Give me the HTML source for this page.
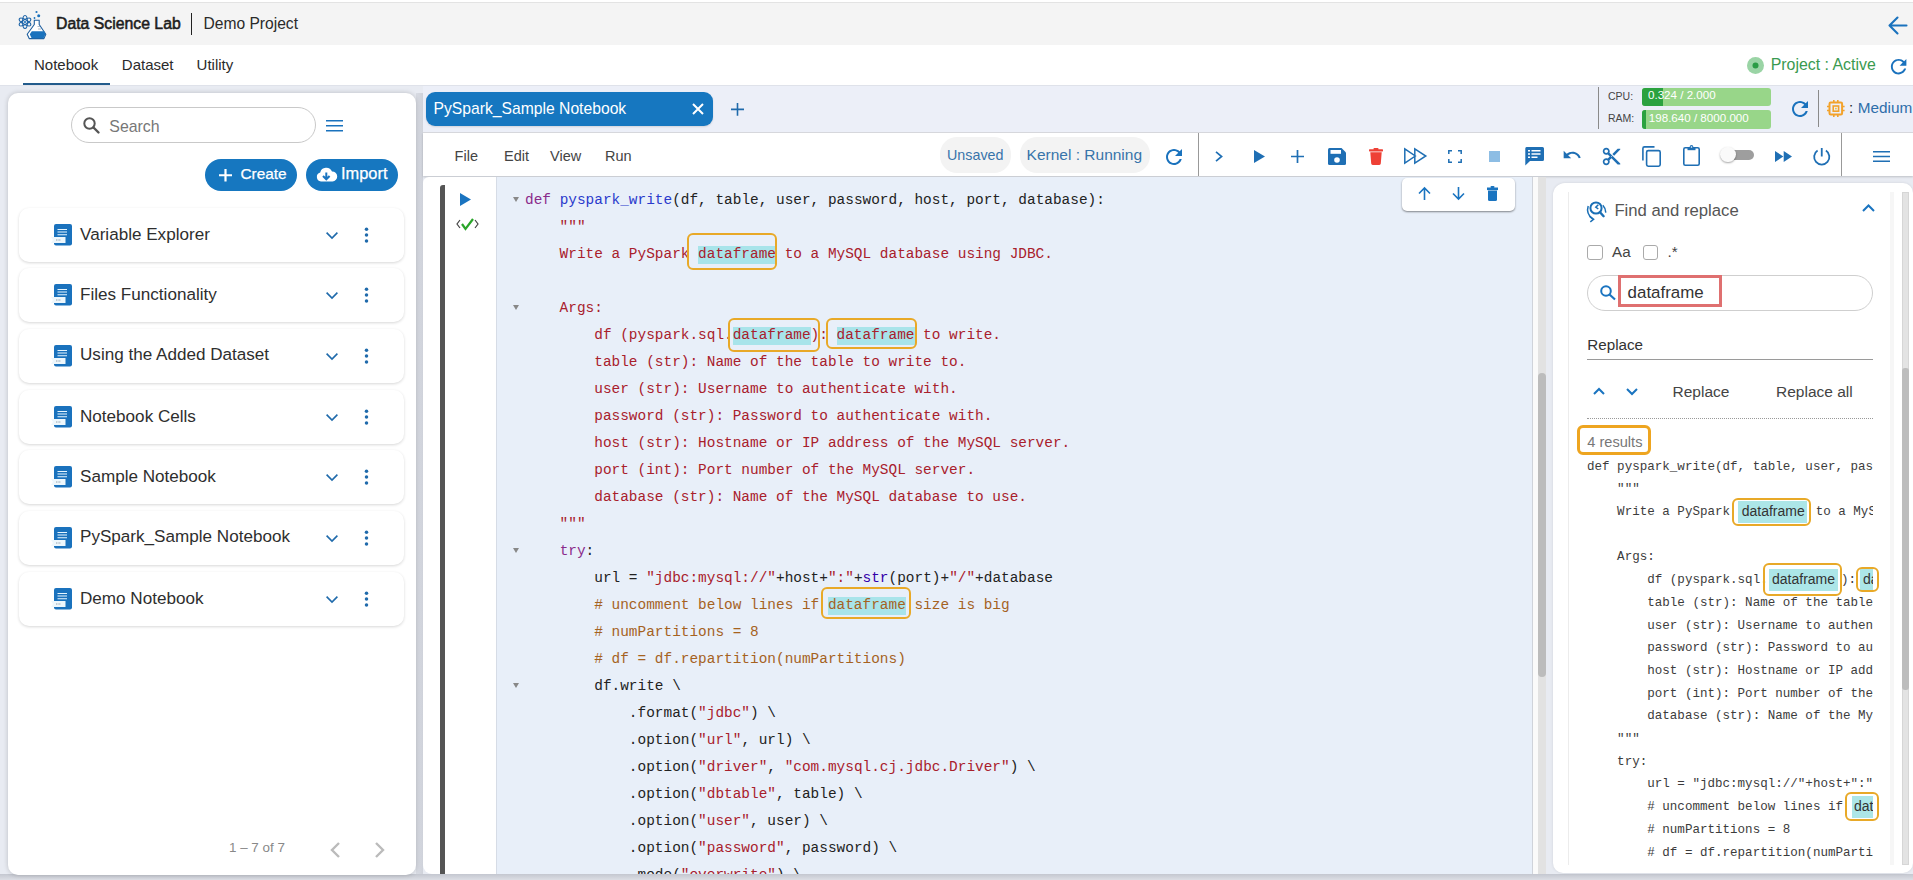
<!DOCTYPE html><html><head><meta charset="utf-8"><style>
*{box-sizing:border-box;margin:0;padding:0}
html,body{width:1913px;height:880px;overflow:hidden}
body{position:relative;background:#e8ebf2;font-family:"Liberation Sans",sans-serif;color:#333}
.a{position:absolute}
svg{position:absolute;overflow:visible}
.t{position:absolute;white-space:pre;line-height:1}
.item{position:absolute;left:19px;width:385px;height:54px;background:#fff;border-radius:10px;box-shadow:0 1px 3px rgba(0,0,0,.16)}
.mono{font-family:"Liberation Mono",monospace}
</style></head><body><div class="a" style="left:0px;top:0px;width:1913px;height:45px;background:#f4f4f4;border-top:2px solid #fff"></div>
<div class="a" style="left:0px;top:2px;width:1913px;height:1px;background:#e3e3e3"></div>
<svg style="left:18px;top:8px" width="30" height="32" viewBox="0 0 30 32">
<g fill="none" stroke="#1f65a8" stroke-width="1.15">
<ellipse cx="7" cy="14" rx="2.4" ry="6.5"/>
<ellipse cx="7" cy="14" rx="2.4" ry="6.5" transform="rotate(60 7 14)"/>
<ellipse cx="7" cy="14" rx="2.4" ry="6.5" transform="rotate(-60 7 14)"/>
</g>
<circle cx="7" cy="14" r="1.1" fill="#1a72bd"/>
<circle cx="18.5" cy="4" r="1.1" fill="#1a72bd"/>
<circle cx="20.7" cy="7.8" r="1.5" fill="#1a72bd"/>
<circle cx="16.5" cy="10" r="0.9" fill="#1a72bd"/>
<path d="M15.8,12.3 H21.6 M16.3,12.3 V16.5 L9.2,26.2 L11.2,30.6 H25.9 L27.8,26.2 L21.2,16.5 V12.3" fill="#fff" stroke="#1f5f9e" stroke-width="1.1" stroke-linejoin="round"/>
<path d="M13.8,23.2 H26.3 L27.4,26.2 L25.6,30.2 H13.6 L11.8,26.2 Z" fill="#1a72bd"/>
<path d="M19.5,18.5 H22 M20,21 H23" stroke="#9ab" stroke-width="0.8"/>
</svg>
<div class="t" style="left:56px;top:15px;font-size:15.8px;line-height:normal;color:#1d1d1d;font-weight:normal;-webkit-text-stroke:0.55px #1d1d1d">Data Science Lab</div>
<div class="a" style="left:190.5px;top:13px;width:1.4px;height:22px;background:#222"></div>
<div class="t" style="left:203.5px;top:15px;font-size:15.6px;line-height:normal;color:#2a2a2a;font-weight:normal;">Demo Project</div>
<svg style="left:1888px;top:16px" width="20" height="19" viewBox="0 0 20 19"><path d="M1.5,9.5 H18.5 M9.5,1.5 L1.5,9.5 L9.5,17.5" fill="none" stroke="#1a72bd" stroke-width="2.1" stroke-linecap="round" stroke-linejoin="round"/></svg>
<div class="a" style="left:0px;top:45px;width:1913px;height:41px;background:#fff;border-bottom:1px solid #dfe2ea"></div>
<div class="t" style="left:34px;top:56px;font-size:15px;line-height:normal;color:#2b2b2b;font-weight:normal;">Notebook</div>
<div class="t" style="left:121.8px;top:56px;font-size:15px;line-height:normal;color:#2b2b2b;font-weight:normal;">Dataset</div>
<div class="t" style="left:196.6px;top:56px;font-size:15px;line-height:normal;color:#2b2b2b;font-weight:normal;">Utility</div>
<div class="a" style="left:23px;top:83px;width:87px;height:2.2px;background:#235c8c"></div>
<svg style="left:1747px;top:57px" width="17" height="17" viewBox="0 0 17 17"><circle cx="8.5" cy="8.5" r="8.5" fill="#9ad4a5"/><circle cx="8.5" cy="8.5" r="3" fill="#2a9c45"/></svg>
<div class="t" style="left:1770.7px;top:56px;font-size:15.9px;line-height:normal;color:#3a9a50;font-weight:normal;">Project : Active</div>
<svg style="left:1886.925px;top:55.125px" width="23.25" height="23.25" viewBox="0 0 24 24"><path d="M17.65 6.35C16.2 4.9 14.21 4 12 4c-4.42 0-7.99 3.58-7.99 8s3.57 8 7.99 8c3.73 0 6.84-2.55 7.73-6h-2.08c-.82 2.33-3.04 4-5.65 4-3.31 0-6-2.69-6-6s2.69-6 6-6c1.66 0 3.14.69 4.22 1.78L13 11h7V4l-2.35 2.35z" fill="#1a72bd"/></svg>
<div class="a" style="left:0px;top:874px;width:1913px;height:6px;background:linear-gradient(#c4c7d0,#dcdee5)"></div>
<div class="a" style="left:416px;top:93px;width:7px;height:781px;background:linear-gradient(90deg,#d9dce4,#cfd2da)"></div>
<div class="a" style="left:8px;top:93px;width:408px;height:782px;background:#fff;border-radius:10px;box-shadow:0 0 5px rgba(0,0,0,.2)"></div>
<div class="a" style="left:71px;top:107px;width:245px;height:36px;border:1px solid #c9c9c9;border-radius:18px;background:#fff"></div>
<svg style="left:83px;top:117px" width="17" height="16" viewBox="0 0 17 16"><circle cx="6.5" cy="6.5" r="5.2" fill="none" stroke="#555" stroke-width="2"/><path d="M10.5,10.5 L15.5,15.5" stroke="#555" stroke-width="2.4" stroke-linecap="round"/></svg>
<div class="t" style="left:109.3px;top:118px;font-size:15.9px;line-height:normal;color:#777;font-weight:normal;">Search</div>
<svg style="left:326px;top:119.5px" width="18" height="12" viewBox="0 0 18 12"><path d="M0,0.8 H17 M0,5.8 H17 M0,10.8 H17" stroke="#1a72bd" stroke-width="1.6"/></svg>
<div class="a" style="left:205px;top:159px;width:92px;height:32px;background:#1677c0;border-radius:16px"></div>
<svg style="left:219px;top:168.7px" width="13" height="12.5" viewBox="0 0 13 12.5"><path d="M6.5,0 V12.5 M0,6.25 H13" stroke="#fff" stroke-width="2.2"/></svg>
<div class="t" style="left:240.4px;top:165px;font-size:15.4px;line-height:normal;color:#fff;font-weight:normal;-webkit-text-stroke:0.25px #fff">Create</div>
<div class="a" style="left:306px;top:159px;width:92px;height:32px;background:#1677c0;border-radius:16px"></div>
<svg style="left:316px;top:166px" width="21" height="17" viewBox="0 0 21 17"><path d="M5,15.5 A4.6,4.6 0 0 1 4.2,6.5 A6.2,6.2 0 0 1 16,5.6 A4.6,4.6 0 0 1 16.5,15.5 Z" fill="#fff"/><path d="M10.3,6.5 V13 M7,10 L10.3,13.3 L13.6,10" fill="none" stroke="#1a74c0" stroke-width="2"/></svg>
<div class="t" style="left:341px;top:164px;font-size:16.4px;line-height:normal;color:#fff;font-weight:normal;-webkit-text-stroke:0.25px #fff">Import</div>
<div class="item" style="top:207.5px"></div>
<svg style="left:51px;top:224px" width="22" height="22" viewBox="0 0 22 22"><rect x="3" y="0" width="18" height="21.5" rx="2" fill="#1a72bd"/>
<path d="M6.5,5.5 H16 M6.5,8 H16 M6.5,10.8 H16" stroke="#e6f6ff" stroke-width="1.1"/>
<path d="M0,13 H14.5 V19 H0 L2,16 Z" fill="#eef7fc"/><path d="M5,16 H10" stroke="#7a8a99" stroke-width="0.8" stroke-dasharray="1,.6"/></svg>
<div class="t" style="left:80px;top:225px;font-size:17.1px;line-height:normal;color:#2e2e2e;font-weight:normal;">Variable Explorer</div>
<svg style="left:326px;top:231.5px" width="12" height="8" viewBox="0 0 12 8"><path d="M0.6,0.6 L6,6 L11.4,0.6" fill="none" stroke="#1f6aab" stroke-width="1.6"/></svg>
<svg style="left:364px;top:227px" width="5" height="16" viewBox="0 0 5 16"><circle cx="2.5" cy="2.2" r="1.75" fill="#1f6aab"/><circle cx="2.5" cy="8" r="1.75" fill="#1f6aab"/><circle cx="2.5" cy="13.9" r="1.75" fill="#1f6aab"/></svg>
<div class="item" style="top:268.2px"></div>
<svg style="left:51px;top:284px" width="22" height="22" viewBox="0 0 22 22"><rect x="3" y="0" width="18" height="21.5" rx="2" fill="#1a72bd"/>
<path d="M6.5,5.5 H16 M6.5,8 H16 M6.5,10.8 H16" stroke="#e6f6ff" stroke-width="1.1"/>
<path d="M0,13 H14.5 V19 H0 L2,16 Z" fill="#eef7fc"/><path d="M5,16 H10" stroke="#7a8a99" stroke-width="0.8" stroke-dasharray="1,.6"/></svg>
<div class="t" style="left:80px;top:285px;font-size:17.1px;line-height:normal;color:#2e2e2e;font-weight:normal;">Files Functionality</div>
<svg style="left:326px;top:291.5px" width="12" height="8" viewBox="0 0 12 8"><path d="M0.6,0.6 L6,6 L11.4,0.6" fill="none" stroke="#1f6aab" stroke-width="1.6"/></svg>
<svg style="left:364px;top:287px" width="5" height="16" viewBox="0 0 5 16"><circle cx="2.5" cy="2.2" r="1.75" fill="#1f6aab"/><circle cx="2.5" cy="8" r="1.75" fill="#1f6aab"/><circle cx="2.5" cy="13.9" r="1.75" fill="#1f6aab"/></svg>
<div class="item" style="top:328.8px"></div>
<svg style="left:51px;top:345px" width="22" height="22" viewBox="0 0 22 22"><rect x="3" y="0" width="18" height="21.5" rx="2" fill="#1a72bd"/>
<path d="M6.5,5.5 H16 M6.5,8 H16 M6.5,10.8 H16" stroke="#e6f6ff" stroke-width="1.1"/>
<path d="M0,13 H14.5 V19 H0 L2,16 Z" fill="#eef7fc"/><path d="M5,16 H10" stroke="#7a8a99" stroke-width="0.8" stroke-dasharray="1,.6"/></svg>
<div class="t" style="left:80px;top:345px;font-size:17.1px;line-height:normal;color:#2e2e2e;font-weight:normal;">Using the Added Dataset</div>
<svg style="left:326px;top:352.5px" width="12" height="8" viewBox="0 0 12 8"><path d="M0.6,0.6 L6,6 L11.4,0.6" fill="none" stroke="#1f6aab" stroke-width="1.6"/></svg>
<svg style="left:364px;top:348px" width="5" height="16" viewBox="0 0 5 16"><circle cx="2.5" cy="2.2" r="1.75" fill="#1f6aab"/><circle cx="2.5" cy="8" r="1.75" fill="#1f6aab"/><circle cx="2.5" cy="13.9" r="1.75" fill="#1f6aab"/></svg>
<div class="item" style="top:389.5px"></div>
<svg style="left:51px;top:406px" width="22" height="22" viewBox="0 0 22 22"><rect x="3" y="0" width="18" height="21.5" rx="2" fill="#1a72bd"/>
<path d="M6.5,5.5 H16 M6.5,8 H16 M6.5,10.8 H16" stroke="#e6f6ff" stroke-width="1.1"/>
<path d="M0,13 H14.5 V19 H0 L2,16 Z" fill="#eef7fc"/><path d="M5,16 H10" stroke="#7a8a99" stroke-width="0.8" stroke-dasharray="1,.6"/></svg>
<div class="t" style="left:80px;top:407px;font-size:17.1px;line-height:normal;color:#2e2e2e;font-weight:normal;">Notebook Cells</div>
<svg style="left:326px;top:413.5px" width="12" height="8" viewBox="0 0 12 8"><path d="M0.6,0.6 L6,6 L11.4,0.6" fill="none" stroke="#1f6aab" stroke-width="1.6"/></svg>
<svg style="left:364px;top:409px" width="5" height="16" viewBox="0 0 5 16"><circle cx="2.5" cy="2.2" r="1.75" fill="#1f6aab"/><circle cx="2.5" cy="8" r="1.75" fill="#1f6aab"/><circle cx="2.5" cy="13.9" r="1.75" fill="#1f6aab"/></svg>
<div class="item" style="top:450.2px"></div>
<svg style="left:51px;top:466px" width="22" height="22" viewBox="0 0 22 22"><rect x="3" y="0" width="18" height="21.5" rx="2" fill="#1a72bd"/>
<path d="M6.5,5.5 H16 M6.5,8 H16 M6.5,10.8 H16" stroke="#e6f6ff" stroke-width="1.1"/>
<path d="M0,13 H14.5 V19 H0 L2,16 Z" fill="#eef7fc"/><path d="M5,16 H10" stroke="#7a8a99" stroke-width="0.8" stroke-dasharray="1,.6"/></svg>
<div class="t" style="left:80px;top:467px;font-size:17.1px;line-height:normal;color:#2e2e2e;font-weight:normal;">Sample Notebook</div>
<svg style="left:326px;top:473.5px" width="12" height="8" viewBox="0 0 12 8"><path d="M0.6,0.6 L6,6 L11.4,0.6" fill="none" stroke="#1f6aab" stroke-width="1.6"/></svg>
<svg style="left:364px;top:469px" width="5" height="16" viewBox="0 0 5 16"><circle cx="2.5" cy="2.2" r="1.75" fill="#1f6aab"/><circle cx="2.5" cy="8" r="1.75" fill="#1f6aab"/><circle cx="2.5" cy="13.9" r="1.75" fill="#1f6aab"/></svg>
<div class="item" style="top:510.9px"></div>
<svg style="left:51px;top:527px" width="22" height="22" viewBox="0 0 22 22"><rect x="3" y="0" width="18" height="21.5" rx="2" fill="#1a72bd"/>
<path d="M6.5,5.5 H16 M6.5,8 H16 M6.5,10.8 H16" stroke="#e6f6ff" stroke-width="1.1"/>
<path d="M0,13 H14.5 V19 H0 L2,16 Z" fill="#eef7fc"/><path d="M5,16 H10" stroke="#7a8a99" stroke-width="0.8" stroke-dasharray="1,.6"/></svg>
<div class="t" style="left:80px;top:527px;font-size:17.1px;line-height:normal;color:#2e2e2e;font-weight:normal;">PySpark_Sample Notebook</div>
<svg style="left:326px;top:534.5px" width="12" height="8" viewBox="0 0 12 8"><path d="M0.6,0.6 L6,6 L11.4,0.6" fill="none" stroke="#1f6aab" stroke-width="1.6"/></svg>
<svg style="left:364px;top:530px" width="5" height="16" viewBox="0 0 5 16"><circle cx="2.5" cy="2.2" r="1.75" fill="#1f6aab"/><circle cx="2.5" cy="8" r="1.75" fill="#1f6aab"/><circle cx="2.5" cy="13.9" r="1.75" fill="#1f6aab"/></svg>
<div class="item" style="top:571.5px"></div>
<svg style="left:51px;top:588px" width="22" height="22" viewBox="0 0 22 22"><rect x="3" y="0" width="18" height="21.5" rx="2" fill="#1a72bd"/>
<path d="M6.5,5.5 H16 M6.5,8 H16 M6.5,10.8 H16" stroke="#e6f6ff" stroke-width="1.1"/>
<path d="M0,13 H14.5 V19 H0 L2,16 Z" fill="#eef7fc"/><path d="M5,16 H10" stroke="#7a8a99" stroke-width="0.8" stroke-dasharray="1,.6"/></svg>
<div class="t" style="left:80px;top:589px;font-size:17.1px;line-height:normal;color:#2e2e2e;font-weight:normal;">Demo Notebook</div>
<svg style="left:326px;top:595.5px" width="12" height="8" viewBox="0 0 12 8"><path d="M0.6,0.6 L6,6 L11.4,0.6" fill="none" stroke="#1f6aab" stroke-width="1.6"/></svg>
<svg style="left:364px;top:591px" width="5" height="16" viewBox="0 0 5 16"><circle cx="2.5" cy="2.2" r="1.75" fill="#1f6aab"/><circle cx="2.5" cy="8" r="1.75" fill="#1f6aab"/><circle cx="2.5" cy="13.9" r="1.75" fill="#1f6aab"/></svg>
<div class="t" style="left:229px;top:840px;font-size:13.4px;line-height:normal;color:#888;font-weight:normal;">1 – 7 of 7</div>
<svg style="left:330px;top:842px" width="10" height="16" viewBox="0 0 10 16"><path d="M9,1 L2,8 L9,15" fill="none" stroke="#bbb" stroke-width="2.4"/></svg>
<svg style="left:375px;top:842px" width="10" height="16" viewBox="0 0 10 16"><path d="M1,1 L8,8 L1,15" fill="none" stroke="#bbb" stroke-width="2.4"/></svg>
<div class="a" style="left:423px;top:86px;width:1490px;height:47px;background:#eceff8;border-bottom:1px solid #d9dadf"></div>
<div class="a" style="left:426px;top:92px;width:287px;height:34px;background:#1677c0;border-radius:9px;box-shadow:0 1px 2px rgba(0,0,0,.12)"></div>
<div class="t" style="left:433.5px;top:100px;font-size:15.7px;line-height:normal;color:#fff;font-weight:normal;">PySpark_Sample Notebook</div>
<svg style="left:692px;top:103px" width="12" height="12" viewBox="0 0 12 12"><path d="M1,1 L11,11 M11,1 L1,11" stroke="#fff" stroke-width="2"/></svg>
<svg style="left:731px;top:103px" width="13" height="13" viewBox="0 0 13 13"><path d="M6.5,0 V12.8 M0,6.4 H13" stroke="#1f6aab" stroke-width="1.6"/></svg>
<div class="a" style="left:1598px;top:87px;width:1px;height:42px;background:#8a8a8a"></div>
<div class="t" style="left:1608px;top:90px;font-size:10.5px;line-height:normal;color:#444;font-weight:normal;">CPU:</div>
<div class="t" style="left:1608px;top:112px;font-size:10.5px;line-height:normal;color:#444;font-weight:normal;">RAM:</div>
<div class="a" style="left:1642px;top:88px;width:129px;height:17.5px;background:#98d689;border-radius:3px;overflow:hidden"></div>
<div class="a" style="left:1642px;top:88px;width:21px;height:17.5px;background:#2ba23f;border-radius:3px 0 0 3px"></div>
<div class="t" style="left:1648px;top:88px;font-size:11.6px;line-height:normal;color:#fff;font-weight:normal;">0.324 / 2.000</div>
<div class="a" style="left:1642px;top:110px;width:129px;height:18.5px;background:#98d689;border-radius:3px"></div>
<div class="a" style="left:1642px;top:110px;width:3.5px;height:18.5px;background:#2ba23f;border-radius:3px 0 0 3px"></div>
<div class="t" style="left:1648.8px;top:111px;font-size:11.6px;line-height:normal;color:#fff;font-weight:normal;">198.640 / 8000.000</div>
<svg style="left:1788.0px;top:96.5px" width="24.0" height="24.0" viewBox="0 0 24 24"><path d="M17.65 6.35C16.2 4.9 14.21 4 12 4c-4.42 0-7.99 3.58-7.99 8s3.57 8 7.99 8c3.73 0 6.84-2.55 7.73-6h-2.08c-.82 2.33-3.04 4-5.65 4-3.31 0-6-2.69-6-6s2.69-6 6-6c1.66 0 3.14.69 4.22 1.78L13 11h7V4l-2.35 2.35z" fill="#1a72bd"/></svg>
<div class="a" style="left:1818px;top:90px;width:1px;height:37px;background:#8a8a8a"></div>
<svg style="left:1827px;top:100px" width="18" height="17" viewBox="0 0 18 17"><rect x="2.5" y="2.5" width="12.6" height="12" rx="1.2" fill="none" stroke="#f2a22b" stroke-width="2"/>
<rect x="6.2" y="6" width="5.4" height="5.2" fill="none" stroke="#f2a22b" stroke-width="1.6"/><rect x="8" y="7.8" width="1.8" height="1.6" fill="#f7c040"/>
<path d="M6.8,0 V2 M10.8,0 V2 M6.8,15 V17 M10.8,15 V17 M0,6.5 H2 M0,10.5 H2 M15.6,6.5 H17.6 M15.6,10.5 H17.6" stroke="#f2a22b" stroke-width="1.6"/></svg>
<div class="t" style="left:1849px;top:99px;font-size:15px;line-height:normal;color:#222;font-weight:normal;">:</div>
<div class="t" style="left:1857.8px;top:99px;font-size:15.3px;line-height:normal;color:#2e6eaa;font-weight:normal;">Medium</div>
<div class="a" style="left:423px;top:133px;width:1490px;height:43px;background:#fff;box-shadow:0 1px 2px rgba(0,0,0,.18)"></div>
<div class="t" style="left:454.6px;top:148px;font-size:14.5px;line-height:normal;color:#444;font-weight:normal;">File</div>
<div class="t" style="left:504px;top:148px;font-size:14.5px;line-height:normal;color:#444;font-weight:normal;">Edit</div>
<div class="t" style="left:550px;top:148px;font-size:14.5px;line-height:normal;color:#444;font-weight:normal;">View</div>
<div class="t" style="left:605px;top:148px;font-size:14.5px;line-height:normal;color:#444;font-weight:normal;">Run</div>
<div class="a" style="left:940px;top:137px;width:71px;height:36px;background:#f3f3f3;border-radius:17px"></div>
<div class="t" style="left:947px;top:147px;font-size:14.3px;line-height:normal;color:#3874aa;font-weight:normal;">Unsaved</div>
<div class="a" style="left:1020px;top:137px;width:130px;height:36px;background:#f3f3f3;border-radius:17px"></div>
<div class="t" style="left:1026.6px;top:146px;font-size:15.5px;line-height:normal;color:#3874aa;font-weight:normal;">Kernel : Running</div>
<svg style="left:1162.0px;top:144.5px" width="24.0" height="24.0" viewBox="0 0 24 24"><path d="M17.65 6.35C16.2 4.9 14.21 4 12 4c-4.42 0-7.99 3.58-7.99 8s3.57 8 7.99 8c3.73 0 6.84-2.55 7.73-6h-2.08c-.82 2.33-3.04 4-5.65 4-3.31 0-6-2.69-6-6s2.69-6 6-6c1.66 0 3.14.69 4.22 1.78L13 11h7V4l-2.35 2.35z" fill="#1a72bd"/></svg>
<div class="a" style="left:1198px;top:133px;width:1px;height:43px;background:#999"></div>
<svg style="left:1215px;top:151px" width="8" height="11" viewBox="0 0 8 11"><path d="M1,0.8 L6.6,5.5 L1,10.2" fill="none" stroke="#1f6fb4" stroke-width="1.7"/></svg>
<svg style="left:1254px;top:150px" width="11" height="13" viewBox="0 0 11 13"><path d="M0,0 L11,6.5 L0,13 Z" fill="#1f6fb4"/></svg>
<svg style="left:1291px;top:150px" width="13" height="13" viewBox="0 0 13 13"><path d="M6.5,0 V13 M0,6.5 H13" stroke="#1f6fb4" stroke-width="1.7"/></svg>
<svg style="left:1328px;top:148px" width="18" height="17" viewBox="0 0 18 17"><path d="M0,1.5 Q0,0 1.5,0 H13.5 L18,4.5 V15.5 Q18,17 16.5,17 H1.5 Q0,17 0,15.5 Z" fill="#1f6fb4"/><rect x="2.5" y="2" width="10.5" height="3.8" fill="#fff"/><circle cx="9" cy="12" r="2.8" fill="#fff"/></svg>
<svg style="left:1369px;top:148px" width="14" height="17" viewBox="0 0 14 17"><rect x="0" y="1.2" width="14" height="2.2" rx="0.6" fill="#ee4035"/><rect x="4.5" y="0" width="5" height="2" rx="0.8" fill="#ee4035"/><path d="M1.3,4.2 H12.7 L11.8,15.6 Q11.7,17 10.3,17 H3.7 Q2.3,17 2.2,15.6 Z" fill="#ee4035"/></svg>
<svg style="left:1404px;top:148px" width="23" height="16" viewBox="0 0 23 16"><path d="M0.8,0.8 L11.3,8 L0.8,15.2 Z M10.8,0.8 L21.8,8 L10.8,15.2 Z" fill="none" stroke="#1f6fb4" stroke-width="1.5" stroke-linejoin="miter"/></svg>
<svg style="left:1448px;top:150px" width="14" height="13" viewBox="0 0 14 13"><path d="M0.8,4 V0.8 H4 M10,0.8 H13.2 V4 M13.2,9 V12.2 H10 M4,12.2 H0.8 V9" fill="none" stroke="#1f6fb4" stroke-width="1.5"/></svg>
<svg style="left:1489px;top:151px" width="11" height="11" viewBox="0 0 11 11"><rect width="11" height="11" fill="#8dbde4"/></svg>
<svg style="left:1524.5px;top:147px" width="19" height="18.5" viewBox="0 0 19 18.5"><path d="M1.5,0 H17.5 Q19,0 19,1.5 V12.5 Q19,14 17.5,14 H5 L0.3,18.5 V1.5 Q0.3,0 1.5,0 Z" fill="#1f6fb4"/><path d="M3,3.8 H5 M6.5,3.8 H15.5 M3,7 H5 M6.5,7 H15.5 M3,10.2 H5 M6.5,10.2 H12.5" stroke="#fff" stroke-width="1.6"/></svg>
<svg style="left:1561.8px;top:145.2px" width="20" height="20" viewBox="0 0 24 24"><path d="M12.5 8c-2.65 0-5.05.99-6.9 2.6L2 7v9h9l-3.62-3.62c1.39-1.16 3.16-1.88 5.12-1.88 3.54 0 6.55 2.31 7.6 5.5l2.37-.78C21.08 11.03 17.15 8 12.5 8z" fill="#1f6fb4"/></svg>
<svg style="left:1601px;top:145.8px" width="21" height="21" viewBox="0 0 24 24"><path d="M9.64 7.64c.23-.5.36-1.05.36-1.640 0-2.21-1.79-4-4-4S2 3.79 2 6s1.79 4 4 4c.59 0 1.14-.13 1.64-.36L10 12l-2.36 2.360C7.14 14.13 6.59 14 6 14c-2.21 0-4 1.79-4 4s1.79 4 4 4 4-1.79 4-4c0-.59-.13-1.14-.36-1.64L12 14l7 7h3v-1L9.64 7.64zM6 8c-1.1 0-2-.89-2-2s.9-2 2-2 2 .89 2 2-.9 2-2 2zm0 12c-1.1 0-2-.89-2-2s.9-2 2-2 2 .89 2 2-.9 2-2 2zm6-7.5c-.28 0-.5-.22-.5-.5s.22-.5.5-.5.5.22.5.5-.22.5-.5.5zM19 3l-6 6 2 2 7-7V3z" fill="#1f6fb4"/></svg>
<svg style="left:1642px;top:146px" width="19" height="21" viewBox="0 0 19 21"><path d="M12.5,0.9 H2.5 Q0.9,0.9 0.9,2.5 V14.5" fill="none" stroke="#1f6fb4" stroke-width="1.6"/><rect x="4.6" y="4.6" width="13.6" height="15.6" rx="1.6" fill="none" stroke="#1f6fb4" stroke-width="1.6"/></svg>
<svg style="left:1683px;top:145px" width="17" height="21" viewBox="0 0 17 21"><rect x="0.8" y="2.8" width="15.4" height="17.4" rx="1.5" fill="none" stroke="#1f6fb4" stroke-width="1.6"/><path d="M4.5,2 H12.5 V5.2 H4.5 Z" fill="#1f6fb4"/><circle cx="8.5" cy="1.8" r="1.8" fill="#1f6fb4"/><circle cx="8.5" cy="2" r="0.8" fill="#fff"/></svg>
<div class="a" style="left:1728px;top:150px;width:26px;height:10px;background:#9e9e9e;border-radius:5px"></div>
<div class="a" style="left:1720px;top:146.5px;width:15.5px;height:15.5px;background:#fafafa;border-radius:50%;box-shadow:0 1px 2px rgba(0,0,0,.35)"></div>
<svg style="left:1774.5px;top:151px" width="17" height="11" viewBox="0 0 17 11"><path d="M0,0 L8.3,5.5 L0,11 Z M8.7,0 L17,5.5 L8.7,11 Z" fill="#1f6fb4"/></svg>
<svg style="left:1813px;top:148px" width="17.5" height="17" viewBox="0 0 17.5 17"><path d="M4.6,2.6 A7.6,7.6 0 1 0 12.9,2.6" fill="none" stroke="#1f6fb4" stroke-width="1.8"/><path d="M8.75,0 V8.5" stroke="#1f6fb4" stroke-width="1.8"/></svg>
<div class="a" style="left:1841px;top:133px;width:1px;height:43px;background:#999"></div>
<svg style="left:1873px;top:151px" width="17" height="11" viewBox="0 0 17 11"><path d="M0,0.8 H17 M0,5.5 H17 M0,10.2 H17" stroke="#1f6fb4" stroke-width="1.5"/></svg>
<div class="a" style="left:423px;top:177px;width:1123px;height:697px;background:#fff;border-radius:6px 0 0 9px"></div>
<div class="a" style="left:440px;top:185px;width:5px;height:689px;background:#555;border-radius:3px 0 0 0"></div>
<svg style="left:460px;top:193px" width="11" height="13" viewBox="0 0 11 13"><path d="M0,0 L11,6.5 L0,13 Z" fill="#1a74c0"/></svg>
<svg style="left:456px;top:218px" width="23" height="12" viewBox="0 0 23 12"><path d="M4,2 L1,6 L4,10 M19,2 L22,6 L19,10" fill="none" stroke="#444" stroke-width="1.2"/><path d="M6,6 L9.5,11 L17,1" fill="none" stroke="#2aa52a" stroke-width="2.2"/></svg>
<div class="a" style="left:496px;top:177px;width:1037px;height:697px;background:#e8eff9;border-left:1px solid #d6dce6"></div>
<div class="a" style="left:1532px;top:177px;width:1px;height:697px;background:#cfd3da"></div>
<div class="a" style="left:1533px;top:177px;width:5px;height:697px;background:#fafafa"></div>
<div class="a" style="left:1538px;top:177px;width:8px;height:697px;background:#e2e2e2"></div>
<div class="a" style="left:1538px;top:373px;width:8px;height:304px;background:#bcbcbc;border-radius:4px"></div>
<div class="a" style="left:497px;top:177px;width:1035px;height:697px;overflow:hidden">
<div class="a" style="left:201.2px;top:68.5px;width:77.9px;height:18px;background:#a8e4ea"></div>
<div class="a" style="left:235.8px;top:149.5px;width:77.9px;height:18px;background:#a8e4ea"></div>
<div class="a" style="left:339.8px;top:149.5px;width:77.9px;height:18px;background:#a8e4ea"></div>
<div class="a" style="left:331.1px;top:419.5px;width:77.9px;height:18px;background:#a8e4ea"></div>
<div class="t mono" style="left:28px;top:10px;font-size:14.43px;line-height:27px;height:27px"><span style="color:#8a2a8a">def</span><span style="color:#222"> </span><span style="color:#2a3acc">pyspark_write</span><span style="color:#222">(df, table, user, password, host, port, database):</span></div>
<div class="t mono" style="left:28px;top:37px;font-size:14.43px;line-height:27px;height:27px"><span style="color:#a8202c">    &quot;&quot;&quot;</span></div>
<div class="t mono" style="left:28px;top:64px;font-size:14.43px;line-height:27px;height:27px"><span style="color:#a8202c">    Write a PySpark dataframe to a MySQL database using JDBC.</span></div>
<div class="t mono" style="left:28px;top:91px;font-size:14.43px;line-height:27px;height:27px"></div>
<div class="t mono" style="left:28px;top:118px;font-size:14.43px;line-height:27px;height:27px"><span style="color:#a8202c">    Args:</span></div>
<div class="t mono" style="left:28px;top:145px;font-size:14.43px;line-height:27px;height:27px"><span style="color:#a8202c">        df (pyspark.sql.dataframe): dataframe to write.</span></div>
<div class="t mono" style="left:28px;top:172px;font-size:14.43px;line-height:27px;height:27px"><span style="color:#a8202c">        table (str): Name of the table to write to.</span></div>
<div class="t mono" style="left:28px;top:199px;font-size:14.43px;line-height:27px;height:27px"><span style="color:#a8202c">        user (str): Username to authenticate with.</span></div>
<div class="t mono" style="left:28px;top:226px;font-size:14.43px;line-height:27px;height:27px"><span style="color:#a8202c">        password (str): Password to authenticate with.</span></div>
<div class="t mono" style="left:28px;top:253px;font-size:14.43px;line-height:27px;height:27px"><span style="color:#a8202c">        host (str): Hostname or IP address of the MySQL server.</span></div>
<div class="t mono" style="left:28px;top:280px;font-size:14.43px;line-height:27px;height:27px"><span style="color:#a8202c">        port (int): Port number of the MySQL server.</span></div>
<div class="t mono" style="left:28px;top:307px;font-size:14.43px;line-height:27px;height:27px"><span style="color:#a8202c">        database (str): Name of the MySQL database to use.</span></div>
<div class="t mono" style="left:28px;top:334px;font-size:14.43px;line-height:27px;height:27px"><span style="color:#a8202c">    &quot;&quot;&quot;</span></div>
<div class="t mono" style="left:28px;top:361px;font-size:14.43px;line-height:27px;height:27px"><span style="color:#222">    </span><span style="color:#8a2a8a">try</span><span style="color:#222">:</span></div>
<div class="t mono" style="left:28px;top:388px;font-size:14.43px;line-height:27px;height:27px"><span style="color:#222">        url = </span><span style="color:#a8202c">&quot;jdbc:mysql://&quot;</span><span style="color:#222">+host+</span><span style="color:#a8202c">&quot;:&quot;</span><span style="color:#222">+</span><span style="color:#3300aa">str</span><span style="color:#222">(port)+</span><span style="color:#a8202c">&quot;/&quot;</span><span style="color:#222">+database</span></div>
<div class="t mono" style="left:28px;top:415px;font-size:14.43px;line-height:27px;height:27px"><span style="color:#a5621f">        # uncomment below lines if dataframe size is big</span></div>
<div class="t mono" style="left:28px;top:442px;font-size:14.43px;line-height:27px;height:27px"><span style="color:#a5621f">        # numPartitions = 8</span></div>
<div class="t mono" style="left:28px;top:469px;font-size:14.43px;line-height:27px;height:27px"><span style="color:#a5621f">        # df = df.repartition(numPartitions)</span></div>
<div class="t mono" style="left:28px;top:496px;font-size:14.43px;line-height:27px;height:27px"><span style="color:#222">        df.write \</span></div>
<div class="t mono" style="left:28px;top:523px;font-size:14.43px;line-height:27px;height:27px"><span style="color:#222">            .format(</span><span style="color:#a8202c">&quot;jdbc&quot;</span><span style="color:#222">) \</span></div>
<div class="t mono" style="left:28px;top:550px;font-size:14.43px;line-height:27px;height:27px"><span style="color:#222">            .option(</span><span style="color:#a8202c">&quot;url&quot;</span><span style="color:#222">, url) \</span></div>
<div class="t mono" style="left:28px;top:577px;font-size:14.43px;line-height:27px;height:27px"><span style="color:#222">            .option(</span><span style="color:#a8202c">&quot;driver&quot;</span><span style="color:#222">, </span><span style="color:#a8202c">&quot;com.mysql.cj.jdbc.Driver&quot;</span><span style="color:#222">) \</span></div>
<div class="t mono" style="left:28px;top:604px;font-size:14.43px;line-height:27px;height:27px"><span style="color:#222">            .option(</span><span style="color:#a8202c">&quot;dbtable&quot;</span><span style="color:#222">, table) \</span></div>
<div class="t mono" style="left:28px;top:631px;font-size:14.43px;line-height:27px;height:27px"><span style="color:#222">            .option(</span><span style="color:#a8202c">&quot;user&quot;</span><span style="color:#222">, user) \</span></div>
<div class="t mono" style="left:28px;top:658px;font-size:14.43px;line-height:27px;height:27px"><span style="color:#222">            .option(</span><span style="color:#a8202c">&quot;password&quot;</span><span style="color:#222">, password) \</span></div>
<div class="t mono" style="left:28px;top:685px;font-size:14.43px;line-height:27px;height:27px"><span style="color:#222">            .mode(</span><span style="color:#a8202c">&quot;overwrite&quot;</span><span style="color:#222">) \</span></div>
<svg style="left:16px;top:20px" width="6" height="5"><path d="M0,0 H6 L3,5 Z" fill="#888"/></svg>
<svg style="left:16px;top:128px" width="6" height="5"><path d="M0,0 H6 L3,5 Z" fill="#888"/></svg>
<svg style="left:16px;top:371px" width="6" height="5"><path d="M0,0 H6 L3,5 Z" fill="#888"/></svg>
<svg style="left:16px;top:506px" width="6" height="5"><path d="M0,0 H6 L3,5 Z" fill="#888"/></svg>
</div>
<div class="a" style="left:687px;top:233px;width:90px;height:37px;border:2.5px solid #e8a928;border-radius:6px"></div>
<div class="a" style="left:728px;top:318px;width:92px;height:34px;border:2.5px solid #e8a928;border-radius:6px"></div>
<div class="a" style="left:826px;top:318px;width:91px;height:31px;border:2.5px solid #e8a928;border-radius:6px"></div>
<div class="a" style="left:821px;top:587px;width:90px;height:32px;border:2.5px solid #e8a928;border-radius:6px"></div>
<div class="a" style="left:1402px;top:178px;width:113px;height:33px;background:#fff;border-radius:5px;box-shadow:0 1px 2px rgba(0,0,0,.45)"></div>
<svg style="left:1418px;top:187px" width="13" height="13" viewBox="0 0 13 13"><path d="M6.5,13 V1 M1,6.5 L6.5,1 L12,6.5" fill="none" stroke="#1a74c0" stroke-width="1.6"/></svg>
<svg style="left:1452px;top:187px" width="13" height="13" viewBox="0 0 13 13"><path d="M6.5,0 V12 M1,6.5 L6.5,12 L12,6.5" fill="none" stroke="#1a74c0" stroke-width="1.6"/></svg>
<svg style="left:1487px;top:186px" width="11" height="15" viewBox="0 0 11 15"><rect x="0" y="1.5" width="11" height="2.6" fill="#1a74c0"/><rect x="3.5" y="0" width="4" height="2" rx="1" fill="#1a74c0"/><path d="M1,4.5 H10 V13.5 Q10,15 8.5,15 H2.5 Q1,15 1,13.5 Z" fill="#1a74c0"/></svg>
<div class="a" style="left:1553px;top:183px;width:360px;height:690px;background:#fff;border-radius:12px 10px 10px 10px;box-shadow:0 0 3px rgba(0,0,0,.1)"></div>
<div class="a" style="left:1568px;top:192px;width:326px;height:673px;border-left:1px solid #ececec;border-right:4px solid #f6f6f6"></div>
<div class="a" style="left:1902px;top:192px;width:7px;height:673px;background:#e3e3e3;border:1px solid #d6d6d6"></div>
<div class="a" style="left:1902px;top:368px;width:7px;height:322px;background:#bdbdbd;border-radius:3px"></div>
<svg style="left:1584px;top:200px" width="24" height="22" viewBox="0 0 24 22"><circle cx="12" cy="8" r="5.6" fill="none" stroke="#1a6fb5" stroke-width="2"/><path d="M16,12.2 L19.6,16.2" stroke="#1a6fb5" stroke-width="2.4" stroke-linecap="round"/><path d="M14.3,4.8 L11.8,7.2 L14.3,9" fill="none" stroke="#1a6fb5" stroke-width="1.5"/><path d="M4.2,6 Q1.8,13.5 8.6,19" fill="none" stroke="#1a6fb5" stroke-width="1.5"/><path d="M5.8,16.3 L9.6,19.3 L6.3,21.8" fill="none" stroke="#1a6fb5" stroke-width="1.5"/><path d="M18.8,5.2 Q21.6,8 21.8,12.6" fill="none" stroke="#1a6fb5" stroke-width="1.5"/></svg>
<div class="t" style="left:1614.4px;top:201px;font-size:16.7px;line-height:normal;color:#555;font-weight:normal;">Find and replace</div>
<svg style="left:1862px;top:204px" width="13" height="8" viewBox="0 0 13 8"><path d="M1,7 L6.5,1.5 L12,7" fill="none" stroke="#1a74c0" stroke-width="2"/></svg>
<div class="a" style="left:1587px;top:245px;width:16px;height:15px;border:1.3px solid #aaa;border-radius:3px"></div>
<div class="t" style="left:1612px;top:243px;font-size:15.2px;line-height:normal;color:#444;font-weight:normal;">Aa</div>
<div class="a" style="left:1643px;top:245px;width:15px;height:15px;border:1.3px solid #aaa;border-radius:3px"></div>
<div class="t" style="left:1667.6px;top:243px;font-size:15.2px;line-height:normal;color:#444;font-weight:normal;">.*</div>
<div class="a" style="left:1587px;top:275px;width:286px;height:36px;border:1px solid #cfcfcf;border-radius:18px"></div>
<svg style="left:1600px;top:285px" width="16" height="15" viewBox="0 0 16 15"><circle cx="6" cy="6" r="4.8" fill="none" stroke="#1a74c0" stroke-width="2"/><path d="M9.5,9.5 L15,14.5" stroke="#1a74c0" stroke-width="2.2"/></svg>
<div class="a" style="left:1618px;top:275px;width:104px;height:32px;border:3px solid #df7070"></div>
<div class="t" style="left:1627.6px;top:283px;font-size:16.9px;line-height:normal;color:#333;font-weight:normal;">dataframe</div>
<div class="t" style="left:1587.3px;top:336px;font-size:15.2px;line-height:normal;color:#333;font-weight:normal;">Replace</div>
<div class="a" style="left:1587px;top:359px;width:286px;height:1.3px;background:#9a9a9a"></div>
<svg style="left:1593px;top:388px" width="12" height="7" viewBox="0 0 12 7"><path d="M1,6 L6,1 L11,6" fill="none" stroke="#1a74c0" stroke-width="2"/></svg>
<svg style="left:1626px;top:388px" width="12" height="7" viewBox="0 0 12 7"><path d="M1,1 L6,6 L11,1" fill="none" stroke="#1a74c0" stroke-width="2"/></svg>
<div class="t" style="left:1672.5px;top:383px;font-size:15.5px;line-height:normal;color:#444;font-weight:normal;">Replace</div>
<div class="t" style="left:1776px;top:383px;font-size:15.5px;line-height:normal;color:#444;font-weight:normal;">Replace all</div>
<div class="a" style="left:1587px;top:418px;width:286px;height:1px;border-top:1px dotted #999"></div>
<div class="a" style="left:1577px;top:425px;width:74px;height:30px;border:3px solid #eea520;border-radius:6px"></div>
<div class="t" style="left:1587.3px;top:434px;font-size:14.6px;line-height:normal;color:#777;font-weight:normal;">4 results</div>
<div class="a" style="left:1587px;top:440px;width:286px;height:425px;overflow:hidden">
<div class="t mono" style="left:0px;top:15.6px;font-size:12.55px;line-height:22.7px;color:#3c3c3c">def pyspark_write(df, table, user, pas</div>
<div class="t mono" style="left:0px;top:38.3px;font-size:12.55px;line-height:22.7px;color:#3c3c3c">    &quot;&quot;&quot;</div>
<div class="t mono" style="left:0px;top:61.0px;font-size:12.55px;line-height:22.7px;color:#3c3c3c">    Write a PySpark </div>
<div class="t mono" style="left:0px;top:83.7px;font-size:12.55px;line-height:22.7px;color:#3c3c3c"></div>
<div class="t mono" style="left:0px;top:106.4px;font-size:12.55px;line-height:22.7px;color:#3c3c3c">    Args:</div>
<div class="t mono" style="left:0px;top:129.1px;font-size:12.55px;line-height:22.7px;color:#3c3c3c">        df (pyspark.sql.</div>
<div class="t mono" style="left:0px;top:151.8px;font-size:12.55px;line-height:22.7px;color:#3c3c3c">        table (str): Name of the table</div>
<div class="t mono" style="left:0px;top:174.5px;font-size:12.55px;line-height:22.7px;color:#3c3c3c">        user (str): Username to authen</div>
<div class="t mono" style="left:0px;top:197.2px;font-size:12.55px;line-height:22.7px;color:#3c3c3c">        password (str): Password to au</div>
<div class="t mono" style="left:0px;top:219.9px;font-size:12.55px;line-height:22.7px;color:#3c3c3c">        host (str): Hostname or IP add</div>
<div class="t mono" style="left:0px;top:242.6px;font-size:12.55px;line-height:22.7px;color:#3c3c3c">        port (int): Port number of the</div>
<div class="t mono" style="left:0px;top:265.3px;font-size:12.55px;line-height:22.7px;color:#3c3c3c">        database (str): Name of the My</div>
<div class="t mono" style="left:0px;top:288.0px;font-size:12.55px;line-height:22.7px;color:#3c3c3c">    &quot;&quot;&quot;</div>
<div class="t mono" style="left:0px;top:310.7px;font-size:12.55px;line-height:22.7px;color:#3c3c3c">    try:</div>
<div class="t mono" style="left:0px;top:333.4px;font-size:12.55px;line-height:22.7px;color:#3c3c3c">        url = &quot;jdbc:mysql://&quot;+host+&quot;:&quot;</div>
<div class="t mono" style="left:0px;top:356.1px;font-size:12.55px;line-height:22.7px;color:#3c3c3c">        # uncomment below lines if </div>
<div class="t mono" style="left:0px;top:378.8px;font-size:12.55px;line-height:22.7px;color:#3c3c3c">        # numPartitions = 8</div>
<div class="t mono" style="left:0px;top:401.5px;font-size:12.55px;line-height:22.7px;color:#3c3c3c">        # df = df.repartition(numParti</div>
<div class="a" style="left:151.0px;top:61.0px;width:68.8px;height:22px;background:#ace6e8"></div>
<div class="a" style="left:182.0px;top:129.1px;width:69.0px;height:22px;background:#ace6e8"></div>
<div class="a" style="left:273.4px;top:129.1px;width:19.6px;height:22px;background:#ace6e8"></div>
<div class="a" style="left:264.6px;top:356.1px;width:28.4px;height:22px;background:#ace6e8"></div>
<div class="t" style="left:154.7px;top:63.8px;font-size:14px;color:#333">dataframe</div>
<div class="t mono" style="left:228.7px;top:61.0px;font-size:12.55px;line-height:22.7px;color:#3c3c3c">to a MyS</div>
<div class="t" style="left:185.0px;top:131.9px;font-size:14px;color:#333">dataframe</div>
<div class="t mono" style="left:254.0px;top:129.1px;font-size:12.55px;line-height:22.7px;color:#3c3c3c">): </div>
<div class="t" style="left:276.0px;top:131.9px;font-size:14px;color:#333">da</div>
<div class="t" style="left:267.0px;top:358.9px;font-size:14px;color:#333">dat</div>
</div>
<div class="a" style="left:1732px;top:498px;width:79px;height:28px;border:2.5px solid #e8a928;border-radius:6px"></div>
<div class="a" style="left:1763px;top:563px;width:79px;height:33px;border:2.5px solid #e8a928;border-radius:6px"></div>
<div class="a" style="left:1856px;top:567px;width:23px;height:25px;border:2.5px solid #e8a928;border-radius:6px"></div>
<div class="a" style="left:1845px;top:792px;width:34px;height:29px;border:2.5px solid #e8a928;border-radius:6px"></div></body></html>
